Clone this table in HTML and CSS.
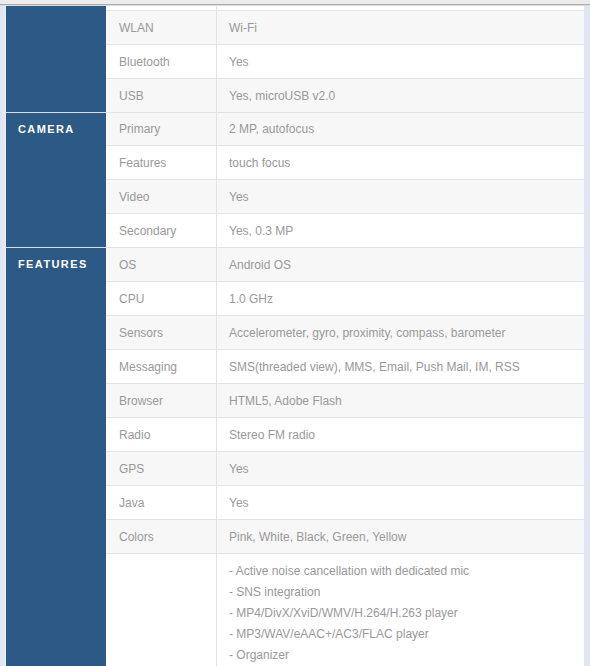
FILE: index.html
```html
<!DOCTYPE html>
<html lang="en">
<head>
<meta charset="utf-8">
<title>Specifications</title>
<link rel="stylesheet" href="styles.css">
</head>
<body>
<div class="topbar"></div>
<div class="topshade"></div>
<div class="specs">
  <div class="cat cat-net"></div>
  <div class="k stub"></div><div class="v stub"></div>
  <div class="k odd">WLAN</div><div class="v odd">Wi-Fi</div>
  <div class="k">Bluetooth</div><div class="v">Yes</div>
  <div class="k odd">USB</div><div class="v odd">Yes, microUSB v2.0</div>

  <div class="cat cat-cam">CAMERA</div>
  <div class="k odd short">Primary</div><div class="v odd short">2 MP, autofocus</div>
  <div class="k">Features</div><div class="v">touch focus</div>
  <div class="k odd">Video</div><div class="v odd">Yes</div>
  <div class="k">Secondary</div><div class="v">Yes, 0.3 MP</div>

  <div class="cat cat-feat">FEATURES</div>
  <div class="k odd">OS</div><div class="v odd">Android OS</div>
  <div class="k">CPU</div><div class="v">1.0 GHz</div>
  <div class="k odd">Sensors</div><div class="v odd">Accelerometer, gyro, proximity, compass, barometer</div>
  <div class="k">Messaging</div><div class="v">SMS(threaded view), MMS, Email, Push Mail, IM, RSS</div>
  <div class="k odd">Browser</div><div class="v odd">HTML5, Adobe Flash</div>
  <div class="k">Radio</div><div class="v">Stereo FM radio</div>
  <div class="k odd">GPS</div><div class="v odd">Yes</div>
  <div class="k">Java</div><div class="v">Yes</div>
  <div class="k odd">Colors</div><div class="v odd">Pink, White, Black, Green, Yellow</div>
  <div class="k multi"></div>
  <div class="v multi">
    <div>- Active noise cancellation with dedicated mic</div>
    <div>- SNS integration</div>
    <div>- MP4/DivX/XviD/WMV/H.264/H.263 player</div>
    <div>- MP3/WAV/eAAC+/AC3/FLAC player</div>
    <div>- Organizer</div>
  </div>
</div>
</body>
</html>
```

FILE: styles.css
```css
html, body {
  margin: 0;
  padding: 0;
}
body {
  background: linear-gradient(to right, #dde4f1 0, #e6ebf5 6px, #dfe6f2 100%);
  font-family: "Liberation Sans", Arial, sans-serif;
  font-size: 12px;
  color: #999999;
  height: 666px;
  overflow: hidden;
}
.topbar {
  height: 4px;
  background: #ececec;
  border-bottom: 1px solid #ababab;
}
.topshade {
  height: 1px;
  background: #dcdcdc;
}
.specs {
  display: grid;
  grid-template-columns: 100px 111px 367px;
  width: 578px;
  margin-left: 6px;
  background: #ffffff;
}
.cat {
  grid-column: 1;
  background: #2c5985;
  color: #ffffff;
  font-weight: bold;
  font-size: 11px;
  letter-spacing: 1.4px;
  padding: 10px 0 0 12px;
  border-bottom: 1px solid #d6dee9;
}
.cat-net { grid-row: span 4; }
.cat-cam { grid-row: span 4; }
.cat-feat { grid-row: span 10; border-bottom: 0; }
.k, .v {
  display: flex;
  align-items: center;
  height: 33px;
  border-bottom: 1px solid #e3e3e3;
  background: #ffffff;
  white-space: nowrap;
}
.k {
  grid-column: 2;
  padding-left: 13px;
  border-right: 1px solid #e3e3e3;
}
.v {
  grid-column: 3;
  padding-left: 12px;
}
.odd {
  background: #f7f7f7;
}
.short {
  height: 32px;
}
.stub {
  height: 4px;
}
.multi {
  height: auto;
  display: block;
  padding-top: 7px;
  padding-bottom: 8px;
  line-height: 21px;
}
```
